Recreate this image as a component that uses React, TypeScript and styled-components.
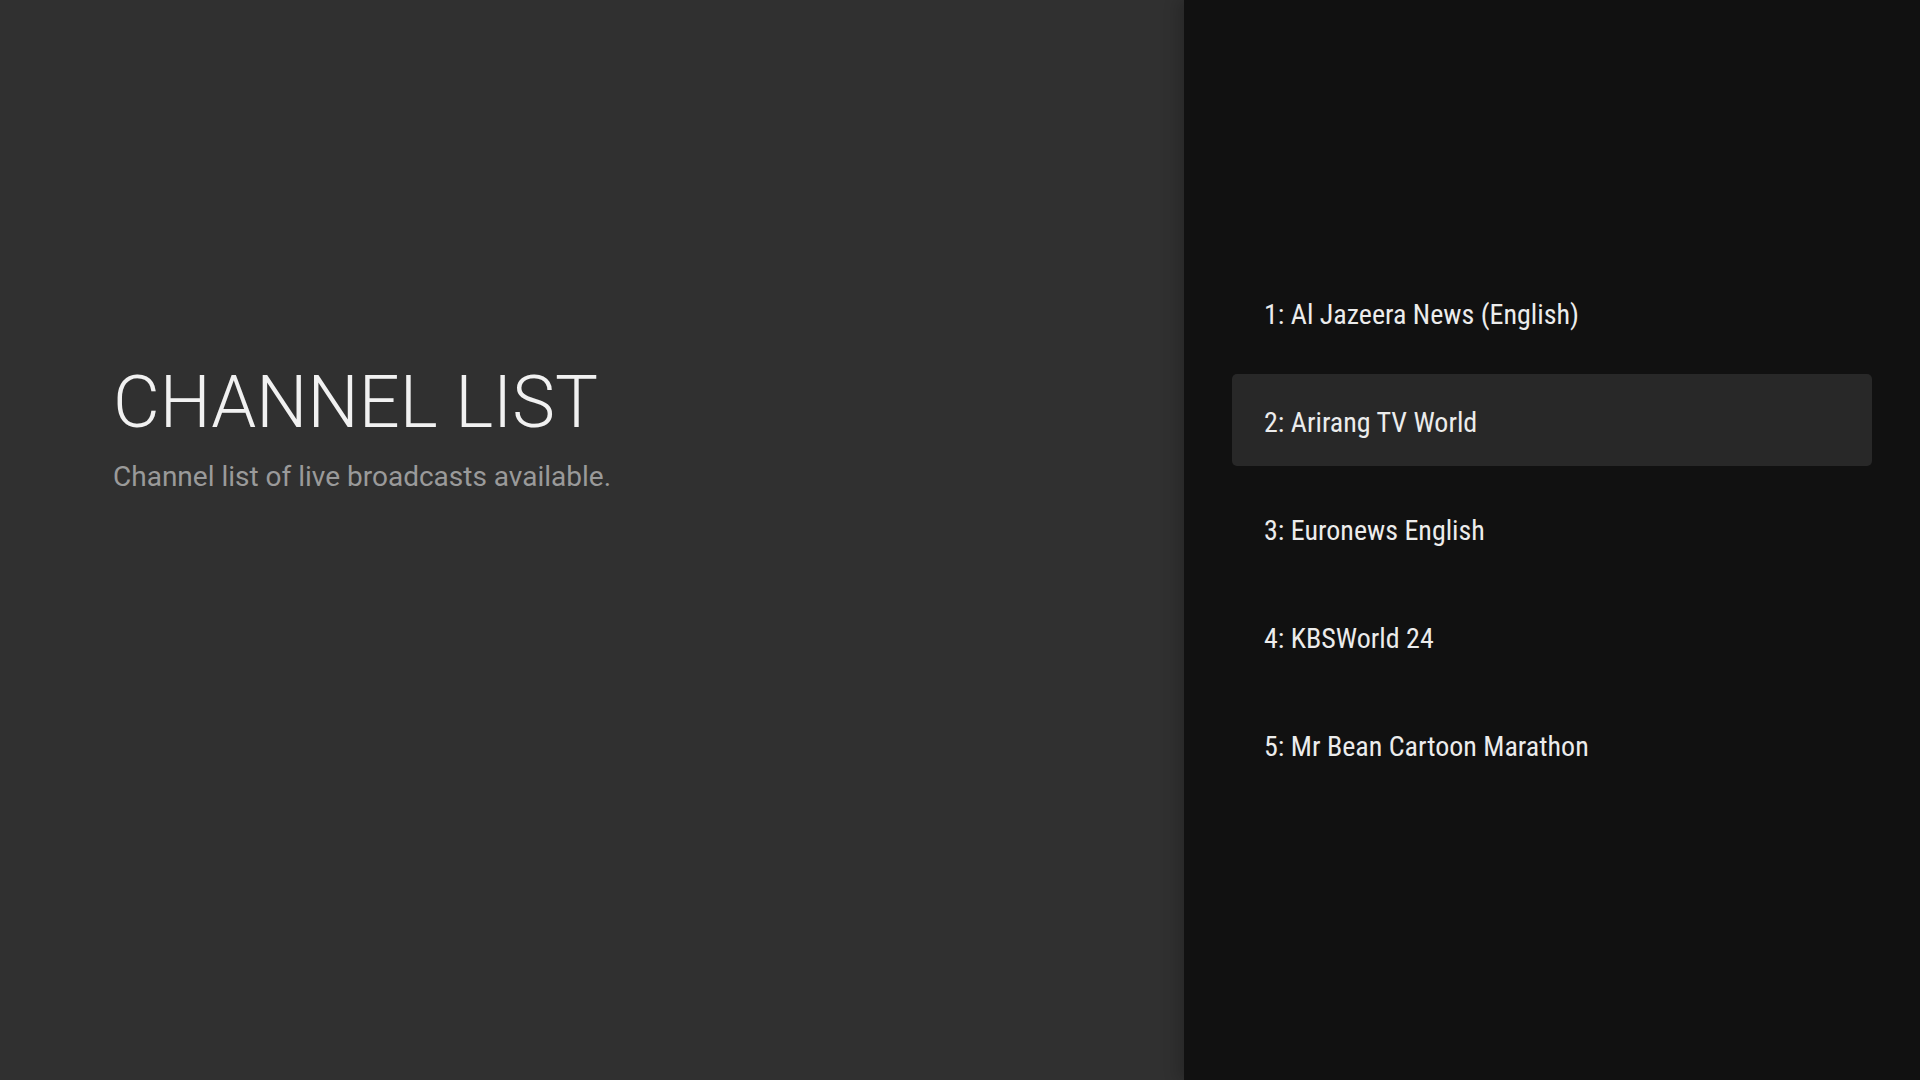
import React from "react";
import styled, { createGlobalStyle } from "styled-components";

const Global = createGlobalStyle`
  html, body { margin: 0; padding: 0; height: 100%; background: #111111; }
  #root { height: 100%; }
  * { box-sizing: border-box; }
`;

const Screen = styled.div`
  display: flex;
  width: 100vw;
  height: 100vh;
  overflow: hidden;
  font-family: Roboto, "Noto Sans", sans-serif;
`;

const Guidance = styled.section`
  flex: 0 0 1184px;
  background: #303030;
  padding: 358px 0 0 113px;
  display: flex;
  flex-direction: column;
  gap: 12px;
`;

const Title = styled.h1`
  margin: 0;
  font-family: Roboto, sans-serif;
  font-weight: 300;
  font-size: 72px;
  line-height: 90px;
  color: #f1f1f1;
  letter-spacing: 0;
`;

const Description = styled.p`
  margin: 0;
  font-family: Roboto, sans-serif;
  font-weight: 400;
  font-size: 28px;
  line-height: 33.6px;
  color: #9a9a9a;
`;

const Actions = styled.section`
  flex: 1;
  background: #111111;
  box-shadow: -6px 0 14px rgba(0, 0, 0, 0.18);
  position: relative;
  z-index: 1;
  padding: 266px 48px 0 48px;
  display: flex;
  flex-direction: column;
  gap: 16px;
`;

const Action = styled.div<{ $focused?: boolean }>`
  height: 92px;
  display: flex;
  align-items: center;
  padding: 6px 32px 0 32px;
  border-radius: 5px;
  background: ${(p) => (p.$focused ? "#282828" : "transparent")};
  font-family: Roboto, sans-serif;
  font-stretch: 75%;
  font-weight: 400;
  font-size: 28px;
  line-height: 33.6px;
  color: #ececec;
`;

const channels = [
  "1: Al Jazeera News (English)",
  "2: Arirang TV World",
  "3: Euronews English",
  "4: KBSWorld 24",
  "5: Mr Bean Cartoon Marathon",
];

export default function App() {
  return (
    <>
      <Global />
      <Screen>
        <Guidance>
          <Title>CHANNEL LIST</Title>
          <Description>Channel list of live broadcasts available.</Description>
        </Guidance>
        <Actions>
          {channels.map((c, i) => (
            <Action key={c} $focused={i === 1}>
              {c}
            </Action>
          ))}
        </Actions>
      </Screen>
    </>
  );
}
